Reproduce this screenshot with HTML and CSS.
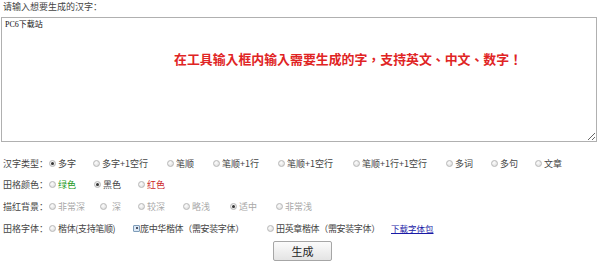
FILE: index.html
```
<!DOCTYPE html>
<html>
<head>
<meta charset="utf-8">
<link rel="stylesheet" href="styles.css">
</head>
<body>
<div class="page">
  <div class="prompt">请输入想要生成的汉字：</div>
  <div class="input-wrap">
    <textarea class="input">PC6下载站</textarea>
    <div class="hint">在工具输入框内输入需要生成的字，支持英文、中文、数字！</div>
  </div>
  <div class="row r1">
    <span class="label">汉字类型：</span>
    <span class="opt"><i class="radio on"></i>多字</span>
    <span class="opt"><i class="radio"></i>多字+1空行</span>
    <span class="opt"><i class="radio"></i>笔顺</span>
    <span class="opt"><i class="radio"></i>笔顺+1行</span>
    <span class="opt"><i class="radio"></i>笔顺+1空行</span>
    <span class="opt"><i class="radio"></i>笔顺+1行+1空行</span>
    <span class="opt"><i class="radio"></i>多词</span>
    <span class="opt"><i class="radio"></i>多句</span>
    <span class="opt"><i class="radio"></i>文章</span>
  </div>
  <div class="row r2">
    <span class="label">田格颜色：</span>
    <span class="opt green"><i class="radio"></i>绿色</span>
    <span class="opt"><i class="radio on"></i>黑色</span>
    <span class="opt red"><i class="radio"></i>红色</span>
  </div>
  <div class="row r3">
    <span class="label">描红背景：</span>
    <span class="opt muted"><i class="radio"></i>非常深</span>
    <span class="opt muted"><i class="radio wide"></i>深</span>
    <span class="opt muted"><i class="radio"></i>较深</span>
    <span class="opt muted"><i class="radio"></i>略浅</span>
    <span class="opt muted"><i class="radio on"></i>适中</span>
    <span class="opt muted"><i class="radio"></i>非常浅</span>
  </div>
  <div class="row r4">
    <span class="label">田格字体：</span>
    <span class="opt"><i class="radio"></i><span class="tight">楷体(支持笔顺)</span></span>
    <span class="opt"><i class="radio focus"></i><span class="tight">庞中华楷体（需安装字体）</span></span>
    <span class="opt"><i class="radio"></i><span class="tight">田英章楷体（需安装字体）</span></span>
    <a class="link" href="#">下载字体包</a>
  </div>
  <div class="actions">
    <button class="btn" type="button">生成</button>
  </div>
</div>
</body>
</html>
```
FILE: styles.css
```
html, body {
  margin: 0;
  padding: 0;
  background: #fff;
}
.page {
  padding: 0 3px 0 1px;
  font-family: "Noto Sans CJK SC", "Noto Sans", sans-serif;
  font-size: 9px;
  color: #444;
}
.prompt {
  height: 14px;
  line-height: 14px;
  padding-left: 2px;
  margin-bottom: 3px;
}
.input-wrap {
  position: relative;
}
.input {
  display: block;
  box-sizing: border-box;
  width: 596px;
  height: 125px;
  margin: 0;
  border: 1px solid #b0b0b0;
  padding: 2px 3px;
  font-family: "Liberation Serif", "Noto Sans CJK SC", serif;
  font-size: 8px;
  line-height: 10px;
  color: #111;
  background: #fff;
  outline: none;
}
.hint {
  position: absolute;
  left: 173px;
  top: 33px;
  font-family: "Noto Sans CJK TC", "Noto Sans CJK SC", sans-serif;
  font-size: 12.9px;
  font-weight: bold;
  line-height: 18px;
  color: #e02424;
  white-space: nowrap;
}
.row {
  display: flex;
  align-items: center;
  height: 22px;
  padding-left: 2px;
  white-space: nowrap;
}
.r1 { margin-top: 11px; height: 20px; }
.label {
  width: 46px;
  flex: none;
}
.opt {
  display: inline-flex;
  align-items: center;
  flex: none;
}
.r1 .opt:nth-child(2) { width: 44px; }
.r1 .opt:nth-child(3) { width: 74px; }
.r1 .opt:nth-child(4) { width: 46px; }
.r1 .opt:nth-child(5) { width: 65px; }
.r1 .opt:nth-child(6) { width: 75px; }
.r1 .opt:nth-child(7) { width: 93px; }
.r1 .opt:nth-child(8) { width: 45px; }
.r1 .opt:nth-child(9) { width: 44px; }
.r2 .opt:nth-child(2) { width: 45px; }
.r2 .opt:nth-child(3) { width: 44px; }
.r3 .opt:nth-child(2) { width: 51px; }
.r3 .opt:nth-child(3) { width: 38px; }
.r3 .opt:nth-child(4) { width: 45px; }
.r3 .opt:nth-child(5) { width: 47px; }
.r3 .opt:nth-child(6) { width: 46px; }
.r4 .opt:nth-child(2) { width: 84px; }
.r4 .opt:nth-child(3) { width: 134px; }
.r4 .opt:nth-child(4) { width: 124px; }
.tight { letter-spacing: -0.35px; }
.radio {
  display: inline-block;
  flex: none;
  box-sizing: border-box;
  width: 7px;
  height: 7px;
  margin-right: 2px;
  border-radius: 50%;
  border: 1px solid #b8b8b8;
  background: radial-gradient(circle at 40% 35%, #fdfdfd 0, #e6e6e6 60%, #d4d4d4 100%);
  position: relative;
}
.radio.wide { margin-right: 5px; }
.radio.on::after {
  content: "";
  position: absolute;
  left: 1px;
  top: 1px;
  width: 3px;
  height: 3px;
  border-radius: 50%;
  background: #333;
}
.radio.focus {
  margin-right: 0;
  border-radius: 1px;
  border: 1px solid #7f9db9;
  background: #dbe8f5;
}
.radio.focus::after {
  content: "";
  position: absolute;
  left: 1.5px;
  top: 1.5px;
  width: 2px;
  height: 2px;
  border-radius: 50%;
  background: #223;
}
.green { color: #1a9a1a; }
.red { color: #cc1f1f; }
.muted { color: #a8a8a8; }
.link {
  color: #1a1aa6;
  font-size: 8.5px;
  text-decoration: underline;
}
.actions {
  display: flex;
  justify-content: center;
  padding-left: 7px;
  margin-top: 2px;
}
.btn {
  box-sizing: border-box;
  width: 59px;
  height: 20px;
  padding: 0;
  border: 1px solid #a6a6a6;
  border-radius: 2px;
  background: linear-gradient(#fbfbfb, #e4e4e4);
  font-family: "Noto Sans CJK SC", sans-serif;
  font-size: 11px;
  color: #222;
}
```
